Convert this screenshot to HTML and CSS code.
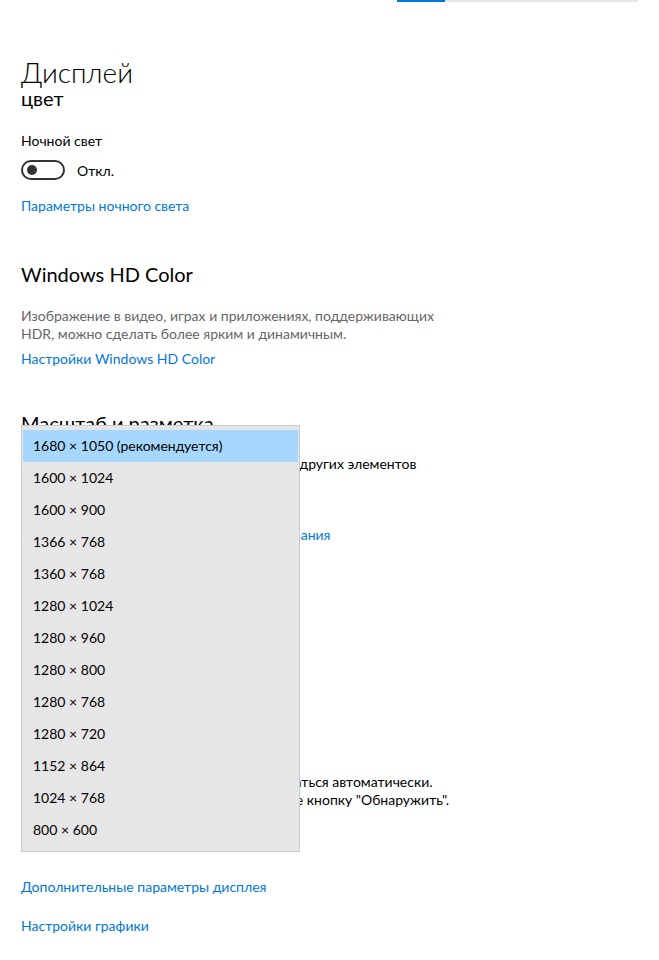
FILE: index.html
```html
<!DOCTYPE html>
<html lang="ru">
<head>
  <meta charset="UTF-8" />
  <title>Дисплей</title>
  <link rel="stylesheet" href="styles.css">
</head>
<body>
  <div class="tabbar">
    <span class="tab-active"></span>
  </div>

  <div class="page">
    <h1 class="title">Дисплей</h1>
    <div class="subtitle">цвет</div>

    <div class="label night-label">Ночной свет</div>
    <div class="toggle-row">
      <span class="toggle"><span class="knob"></span></span>
      <span>Откл.</span>
    </div>
    <a class="link night-link" href="#">Параметры ночного света</a>

    <h2 class="section hd-title">Windows HD Color</h2>
    <p class="desc hd-desc">Изображение в видео, играх и приложениях, поддерживающих HDR, можно сделать более ярким и динамичным.</p>
    <a class="link hd-link" href="#">Настройки Windows HD Color</a>

    <h2 class="section scale-title">Масштаб и разметка</h2>
    <div class="label scale-label">Изменение размера текста, приложений и других элементов</div>
    <div class="combo scale-combo">100% (рекомендуется)</div>
    <a class="link scale-link" href="#">Дополнительные параметры масштабирования</a>

    <div class="label res-label">Разрешение экрана</div>
    <div class="combo res-combo">1680 × 1050 (рекомендуется)</div>
    <div class="label orient-label">Ориентация дисплея</div>
    <div class="combo orient-combo">Альбомная</div>

    <h2 class="section multi-title">Несколько дисплеев</h2>
    <p class="text multi-desc">Старые дисплеи могут не всегда подключаться автоматически. Чтобы попытаться подключиться, нажмите кнопку "Обнаружить".</p>
    <div class="button">Обнаружить</div>

    <a class="link extra-link" href="#">Дополнительные параметры дисплея</a>
    <a class="link gfx-link" href="#">Настройки графики</a>
  </div>

  <!-- открытый список разрешений поверх страницы -->
  <ul class="dropdown">
    <li class="selected">1680 × 1050 (рекомендуется)</li>
    <li>1600 × 1024</li>
    <li>1600 × 900</li>
    <li>1366 × 768</li>
    <li>1360 × 768</li>
    <li>1280 × 1024</li>
    <li>1280 × 960</li>
    <li>1280 × 800</li>
    <li>1280 × 768</li>
    <li>1280 × 720</li>
    <li>1152 × 864</li>
    <li>1024 × 768</li>
    <li>800 × 600</li>
  </ul>
</body>
</html>
```

FILE: styles.css
```css
body {
  margin: 0;
  background: #fff;
  color: #000;
  font-family: 'Lato', 'Noto Sans', sans-serif;
  font-size: 14px;
  overflow: hidden;
}

.tabbar {
  display: flex;
  margin-left: 397px;
  width: 241px;
  height: 2px;
  background: #e6e6e6;
}

.tab-active {
  width: 48px;
  background: #0078d7;
}

.page {
  padding-left: 21px;
  display: flex;
  flex-direction: column;
  align-items: flex-start;
}

.title {
  margin: 54px 0 0;
  font-size: 28px;
  font-weight: 300;
  line-height: 32px;
}

.subtitle {
  font-size: 20px;
  line-height: 20px;
}

.label,
.text,
.desc {
  line-height: 20px;
}

.night-label { margin-top: 23px; }

.toggle-row {
  display: flex;
  align-items: center;
  gap: 12px;
  height: 20px;
  margin-top: 9px;
}

.toggle {
  box-sizing: border-box;
  width: 44px;
  height: 20px;
  border: 2px solid #333;
  border-radius: 10px;
  display: flex;
  align-items: center;
  padding-left: 4px;
}

.knob {
  width: 10px;
  height: 10px;
  border-radius: 50%;
  background: #333;
}

.link {
  color: #0078d7;
  text-decoration: none;
  line-height: 20px;
}

.night-link { margin-top: 16px; }

.section {
  margin: 0;
  font-size: 20px;
  font-weight: 400;
  line-height: 28px;
}

.hd-title { margin-top: 44px; }

.desc {
  margin: 19px 0 0;
  width: 430px;
  color: #666;
  line-height: 18px;
}

.hd-link { margin-top: 6px; }

.scale-title { margin-top: 40px; }

.scale-label { margin-top: 17px; }

.combo {
  box-sizing: border-box;
  width: 260px;
  height: 32px;
  padding: 0 10px;
  border: 2px solid #999;
  line-height: 28px;
}

.scale-combo { margin-top: 9px; }

.scale-link { margin-top: 10px; }

.res-label { margin-top: 22px; }

.res-combo,
.orient-combo { margin-top: 7px; }

.orient-label { margin-top: 18px; }

.multi-title { margin-top: 32px; }

.multi-desc {
  margin: 10px 0 0;
  width: 450px;
  line-height: 18px;
}

.button {
  margin-top: 9px;
  height: 32px;
  padding: 0 20px;
  background: #ccc;
  line-height: 32px;
}

.extra-link { margin-top: 27px; }

.gfx-link { margin-top: 19px; }

.dropdown {
  position: absolute;
  top: 425px;
  left: 21px;
  box-sizing: border-box;
  width: 279px;
  height: 427px;
  margin: 0;
  padding: 4px 1px 5px;
  list-style: none;
  background: #e6e6e6;
  border: 1px solid #ccc;
}

.dropdown li {
  height: 32px;
  padding-left: 10px;
  line-height: 32px;
}

.dropdown .selected {
  background: #a6d8ff;
}
```
